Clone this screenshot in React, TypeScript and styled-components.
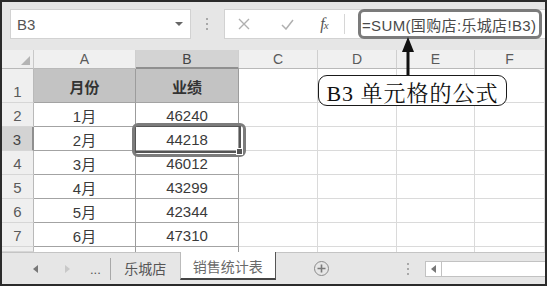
import React from "react";
import styled, { createGlobalStyle } from "styled-components";

const Global = createGlobalStyle`
  html, body { margin: 0; padding: 0; background: #fff; }
  body { font-family: "Liberation Sans", "Noto Sans CJK SC", sans-serif; }
`;

const Stage = styled.div`
  position: relative;
  width: 547px;
  height: 287px;
`;

const Frame = styled.div`
  box-sizing: border-box;
  width: 547px;
  height: 286px;
  border: 2px solid #2b2b2b;
  display: flex;
  flex-direction: column;
  overflow: hidden;
  background: #fff;
`;

/* ---------- formula bar ---------- */
const FormulaBar = styled.div`
  height: 48px;
  flex: none;
  background: #e6e6e6;
  display: flex;
  align-items: flex-start;
  padding: 7px 0 0 8px;
  box-sizing: border-box;
`;

const NameBox = styled.div`
  box-sizing: border-box;
  width: 183px;
  height: 30px;
  background: #fff;
  border: 1px solid #d2d2d2;
  display: flex;
  align-items: center;
  justify-content: space-between;
  padding: 0 7px 0 6px;
  font-size: 15px;
  color: #555;
`;

const DropArrow = styled.span`
  width: 0;
  height: 0;
  border-left: 4px solid transparent;
  border-right: 4px solid transparent;
  border-top: 4px solid #666;
`;

const Grip = styled.div`
  width: 34px;
  height: 30px;
  display: flex;
  flex-direction: column;
  align-items: center;
  justify-content: center;
  gap: 3px;
`;

const GripDot = styled.span`
  width: 2px;
  height: 2px;
  background: #a8a8a8;
`;

const FormulaBox = styled.div`
  box-sizing: border-box;
  flex: 1;
  height: 30px;
  background: #fff;
  border: 1px solid #d2d2d2;
  border-right: none;
  display: flex;
  align-items: center;
`;

const IconCell = styled.div<{ $w: number }>`
  width: ${(p) => p.$w}px;
  height: 100%;
  display: flex;
  align-items: center;
  justify-content: center;
  flex: none;
`;

const Fx = styled.span`
  font-family: "Liberation Serif", serif;
  font-style: italic;
  color: #555;
  font-size: 16px;
  letter-spacing: -1px;
  & > small {
    font-size: 11px;
  }
`;

const VSep = styled.span<{ $h: number; $c: string }>`
  width: 1px;
  height: ${(p) => p.$h}px;
  background: ${(p) => p.$c};
  flex: none;
`;

const FormulaHighlight = styled.div`
  box-sizing: border-box;
  width: 184px;
  height: 30px;
  margin: -1px 3px -1px 13px;
  border: 3px solid #7b7b7b;
  border-radius: 6px;
  display: flex;
  align-items: center;
  padding-left: 1px;
  font-size: 15px;
  letter-spacing: 0.35px;
  color: #4a4a4a;
  white-space: nowrap;
  overflow: hidden;
`;

/* ---------- sheet grid ---------- */
const Sheet = styled.div`
  display: grid;
  grid-template-columns: 32px 102px 103px 79px 79px 78px 1fr;
  grid-template-rows: 19px 34px repeat(6, 24px) 5px;
  flex: none;
`;

const Corner = styled.div`
  box-sizing: border-box;
  background: #efefef;
  border-right: 1px solid #c9c9c9;
  border-bottom: 1px solid #b9b9b9;
  display: flex;
  align-items: flex-end;
  justify-content: flex-end;
  padding: 0 3px 3px 0;
`;

const ColHeader = styled.div<{ $sel?: boolean }>`
  box-sizing: border-box;
  background: ${(p) => (p.$sel ? "#d3d3d3" : "#f0f0f0")};
  border-right: 1px solid #cfcfcf;
  border-bottom: ${(p) => (p.$sel ? "2px solid #8f8f8f" : "1px solid #b9b9b9")};
  display: flex;
  align-items: center;
  justify-content: center;
  font-size: 14px;
  color: ${(p) => (p.$sel ? "#444" : "#5a5a5a")};
  padding-top: ${(p) => (p.$sel ? "1px" : "0")};
`;

const RowHeader = styled.div<{ $sel?: boolean }>`
  box-sizing: border-box;
  background: ${(p) => (p.$sel ? "#d3d3d3" : "#efefef")};
  border-right: ${(p) => (p.$sel ? "2px solid #8f8f8f" : "1px solid #b9b9b9")};
  border-bottom: 1px solid #d6d6d6;
  display: flex;
  align-items: flex-end;
  justify-content: center;
  padding-bottom: 1px;
  font-size: 15px;
  color: ${(p) => (p.$sel ? "#444" : "#5a5a5a")};
  line-height: 18px;
`;

const Cell = styled.div<{ $table?: boolean; $head?: boolean; $open?: boolean }>`
  box-sizing: border-box;
  background: ${(p) => (p.$head ? "#c3c3c3" : "#fff")};
  border-right: 1px solid ${(p) => (p.$table ? "#9c9c9c" : "#dadada")};
  border-bottom: ${(p) =>
    p.$open ? "none" : `1px solid ${p.$table ? "#a3a3a3" : "#dadada"}`};
  display: flex;
  align-items: center;
  justify-content: center;
  font-size: 15px;
  font-weight: ${(p) => (p.$head ? 700 : 400)};
  color: ${(p) => (p.$head ? "#333" : "#3a3a3a")};
  padding-top: 1px;
`;

/* ---------- tab bar ---------- */
const TabBar = styled.div`
  box-sizing: border-box;
  height: 32px;
  flex: none;
  background: #e6e6e6;
  border-top: 1px solid #c4c4c4;
  display: flex;
  align-items: center;
`;

const NavArrow = styled.span<{ $dir: "l" | "r"; $dim?: boolean; $ml: number }>`
  margin-left: ${(p) => p.$ml}px;
  width: 0;
  height: 0;
  border-top: 4px solid transparent;
  border-bottom: 4px solid transparent;
  ${(p) =>
    p.$dir === "l"
      ? `border-right: 5px solid ${p.$dim ? "#c8c8c8" : "#777"};`
      : `border-left: 5px solid ${p.$dim ? "#c8c8c8" : "#777"};`}
`;

const Ellipsis = styled.span<{ $ml: number }>`
  margin-left: ${(p) => p.$ml}px;
  font-size: 13px;
  color: #555;
  letter-spacing: 0px;
  padding-top: 2px;
`;

const Tab = styled.div<{ $active?: boolean }>`
  box-sizing: border-box;
  align-self: flex-start;
  height: ${(p) => (p.$active ? "28px" : "30px")};
  margin-top: ${(p) => (p.$active ? "-1px" : "0")};
  display: flex;
  align-items: center;
  justify-content: center;
  font-size: 14px;
  color: ${(p) => (p.$active ? "#6a6a6a" : "#555")};
  background: ${(p) => (p.$active ? "#fff" : "transparent")};
  border-left: ${(p) => (p.$active ? "1px solid #bbb" : "none")};
  border-right: ${(p) => (p.$active ? "1px solid #555" : "none")};
  border-bottom: ${(p) => (p.$active ? "2px solid #444" : "none")};
  width: ${(p) => (p.$active ? "96px" : "69px")};
  padding-top: ${(p) => (p.$active ? "1px" : "0")};
`;

const AddButton = styled.span`
  box-sizing: border-box;
  margin-left: 38px;
  width: 15px;
  height: 15px;
  border-radius: 50%;
  border: 1.5px solid #8a8a8a;
  display: flex;
  align-items: center;
  justify-content: center;
  color: #7a7a7a;
`;

const BarGrip = styled.div`
  margin-left: 78px;
  display: flex;
  flex-direction: column;
  gap: 3px;
`;

const ScrollBox = styled.div`
  box-sizing: border-box;
  margin-left: 16px;
  flex: 1;
  height: 16px;
  background: #fff;
  border: 1px solid #c2c2c2;
  border-right: none;
  display: flex;
  align-items: stretch;
`;

const ScrollBtn = styled.div`
  box-sizing: border-box;
  width: 16px;
  border-right: 1px solid #c2c2c2;
  display: flex;
  align-items: center;
  justify-content: center;
`;

/* ---------- overlays ---------- */
const CellMark = styled.div`
  position: absolute;
  left: 132px;
  top: 123px;
  width: 114px;
  height: 34px;
  box-sizing: border-box;
  border: 3px solid #7c7c7c;
  border-radius: 6px;
`;

const Selection = styled.div`
  position: absolute;
  left: 134px;
  top: 125px;
  width: 107px;
  height: 28px;
  box-sizing: border-box;
  border: 2px solid #555;
`;

const FillHandle = styled.div`
  position: absolute;
  left: 236px;
  top: 148px;
  width: 7px;
  height: 7px;
  box-sizing: border-box;
  background: #555;
  border: 1px solid #fff;
`;

const Callout = styled.div`
  position: absolute;
  left: 318px;
  top: 75px;
  width: 189px;
  height: 31px;
  box-sizing: border-box;
  border: 1.5px solid #1a1a1a;
  border-radius: 9px;
  background: #fff;
  display: flex;
  align-items: center;
  justify-content: center;
  font-family: "Liberation Serif", "Noto Serif CJK SC", "Noto Sans CJK SC", serif;
  font-size: 22px;
  letter-spacing: 1px;
  color: #111;
  white-space: nowrap;
  padding-top: 1px;
`;

const Arrow = styled.svg`
  position: absolute;
  left: 400px;
  top: 36px;
`;

const cols = ["A", "B", "C", "D", "E", "F"];
const data: [string, string][] = [
  ["1月", "46240"],
  ["2月", "44218"],
  ["3月", "46012"],
  ["4月", "43299"],
  ["5月", "42344"],
  ["6月", "47310"],
];

export default function App() {
  return (
    <Stage>
      <Global />
      <Frame>
        <FormulaBar>
          <NameBox>
            <span>B3</span>
            <DropArrow />
          </NameBox>
          <Grip>
            <GripDot />
            <GripDot />
            <GripDot />
          </Grip>
          <FormulaBox>
            <IconCell $w={38}>
              <svg width="12" height="12" viewBox="0 0 12 12">
                <path d="M1 1L11 11M11 1L1 11" stroke="#b0b0b0" strokeWidth="1.4" />
              </svg>
            </IconCell>
            <IconCell $w={48}>
              <svg width="13" height="11" viewBox="0 0 13 11">
                <path d="M1 6L5 10L12 1" stroke="#b0b0b0" strokeWidth="1.5" fill="none" />
              </svg>
            </IconCell>
            <IconCell $w={26}>
              <Fx>
                f<small>x</small>
              </Fx>
            </IconCell>
            <IconCell $w={7} />
            <VSep $h={20} $c="#d6d6d6" />
            <FormulaHighlight>=SUM(国购店:乐城店!B3)</FormulaHighlight>
          </FormulaBox>
        </FormulaBar>

        <Sheet>
          <Corner>
            <svg width="9" height="9" viewBox="0 0 9 9">
              <polygon points="9,0 9,9 0,9" fill="#b4b4b4" />
            </svg>
          </Corner>
          {cols.map((c) => (
            <ColHeader key={c} $sel={c === "B"}>
              {c}
            </ColHeader>
          ))}

          <RowHeader>1</RowHeader>
          <Cell $table $head>
            月份
          </Cell>
          <Cell $table $head>
            业绩
          </Cell>
          {[0, 1, 2, 3].map((i) => (
            <Cell key={i} />
          ))}

          {data.map(([m, v], i) => (
            <React.Fragment key={m}>
              <RowHeader $sel={i === 1}>{i + 2}</RowHeader>
              <Cell $table>{m}</Cell>
              <Cell $table>{v}</Cell>
              {[0, 1, 2, 3].map((k) => (
                <Cell key={k} />
              ))}
            </React.Fragment>
          ))}

          <RowHeader />
          <Cell $table $open />
          <Cell $table $open />
          {[0, 1, 2, 3].map((k) => (
            <Cell key={k} $open />
          ))}
        </Sheet>

        <TabBar>
          <NavArrow $dir="l" $ml={31} />
          <NavArrow $dir="r" $dim $ml={27} />
          <Ellipsis $ml={20}>...</Ellipsis>
          <IconCell $w={9} />
          <VSep $h={22} $c="#a8a8a8" />
          <Tab>乐城店</Tab>
          <Tab $active>销售统计表</Tab>
          <AddButton>
            <svg width="9" height="9" viewBox="0 0 9 9">
              <path d="M4.5 0.5V8.5M0.5 4.5H8.5" stroke="#7a7a7a" strokeWidth="1.6" />
            </svg>
          </AddButton>
          <BarGrip>
            <GripDot />
            <GripDot />
            <GripDot />
          </BarGrip>
          <ScrollBox>
            <ScrollBtn>
              <NavArrow $dir="l" $ml={0} />
            </ScrollBtn>
          </ScrollBox>
        </TabBar>
      </Frame>

      <Selection />
      <CellMark />
      <FillHandle />
      <Arrow width="16" height="40" viewBox="0 0 16 40">
        <polygon points="8,1 2,16 14,16" fill="#111" />
        <rect x="6.5" y="14" width="3" height="25" fill="#111" />
      </Arrow>
      <Callout>B3 单元格的公式</Callout>
    </Stage>
  );
}
